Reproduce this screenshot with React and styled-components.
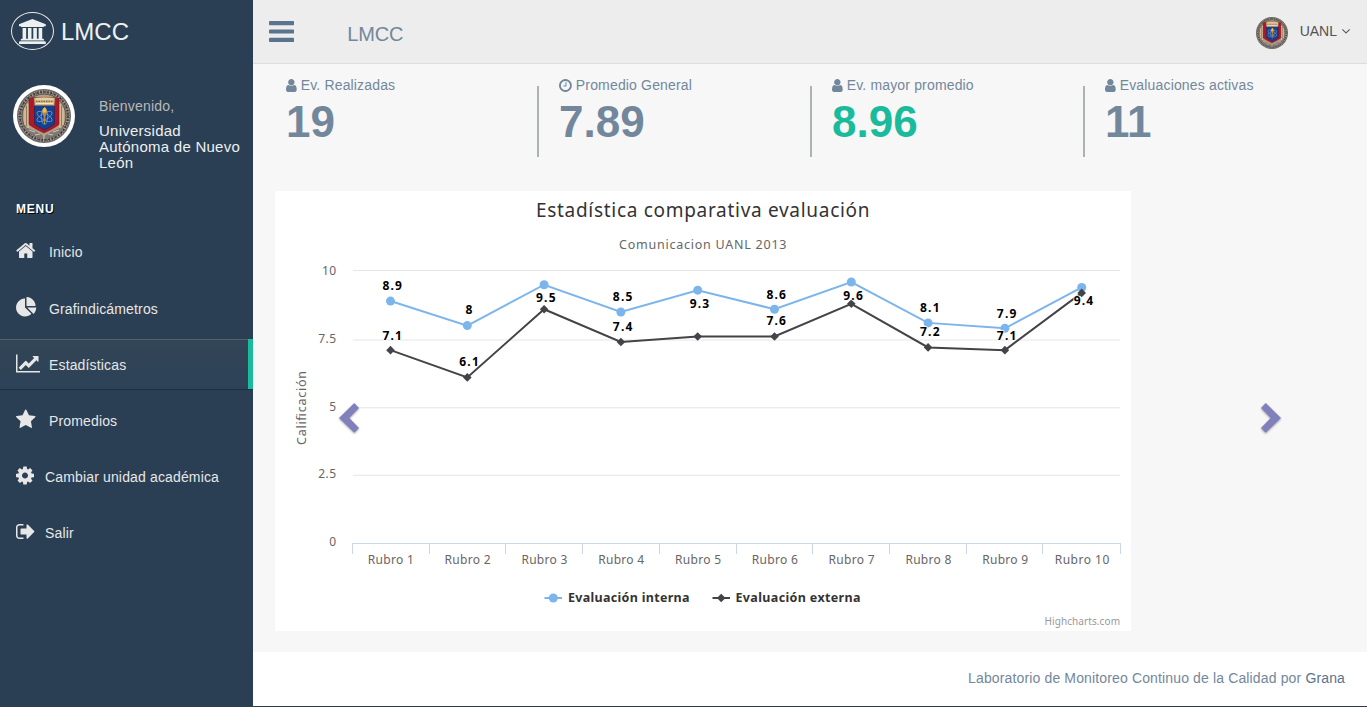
import React from "react";
import styled, { createGlobalStyle, css } from "styled-components";

const GlobalStyle = createGlobalStyle`
  * { box-sizing: border-box; }
  body {
    margin: 0;
    background: #2a3f54;
    color: #73879c;
    font-family: "Liberation Sans", Arial, sans-serif;
    font-size: 14px;
    overflow: hidden;
  }
`;

const Page = styled.div`
  display: flex;
  width: 1367px;
  height: 707px;
`;

const Sidebar = styled.aside`
  width: 253px;
  flex: none;
  background: #2a3f54;
  color: #e7e7e7;
`;

const Brand = styled.div`
  display: flex;
  align-items: center;
  gap: 7px;
  height: 62px;
  padding-left: 11px;
  font-size: 24px;
  color: #ecf0f1;
`;

const BrandBadge = styled.span`
  display: flex;
  align-items: center;
  justify-content: center;
  width: 43px;
  height: 38px;
  border: 1px solid #eaeaea;
  border-radius: 50%;
`;

const BrandName = styled.span`
  padding-top: 2px;
`;

const Profile = styled.div`
  display: flex;
  gap: 24px;
  height: 139px;
  padding: 23px 0 0 13px;
`;

const ProfilePicture = styled.div`
  width: 62px;
  height: 62px;
  padding: 4px;
  background: #fff;
  border-radius: 50%;
  line-height: 0;
`;

const ProfileInfo = styled.div`
  width: 150px;
  padding-top: 13px;
`;

const Welcome = styled.div`
  line-height: 16px;
  color: #bab8b8;
  letter-spacing: 0.2px;
`;

const UserName = styled.div`
  margin-top: 9px;
  font-size: 15px;
  line-height: 16px;
  color: #ecf0f1;
  letter-spacing: 0.25px;
`;

const MenuTitle = styled.h3`
  margin: 0;
  padding-left: 16px;
  height: 25px;
  font-size: 12px;
  line-height: 16px;
  letter-spacing: 0.8px;
  color: #fff;
  text-shadow: 1px 1px #000;
`;

const Menu = styled.ul`
  list-style: none;
  margin: 0;
  padding: 0;
`;

const MenuItem = styled.li`
  display: flex;
  align-items: center;
  height: 50px;
  margin-bottom: 6px;
  padding-left: 16px;
  letter-spacing: 0.15px;
  &:first-child {
    margin-bottom: 7px;
  }
  ${(p) =>
    p.$active &&
    css`
      border-right: 5px solid #1abb9c;
      background: linear-gradient(#334556, #2c4257);
      box-shadow: rgba(0, 0, 0, 0.25) 0 1px 0, inset rgba(255, 255, 255, 0.16) 0 1px 0;
    `}
`;

const MenuIcon = styled.span`
  display: flex;
  flex: none;
  width: ${(p) => (p.$narrow ? 29 : 33)}px;
  margin-top: -2px;
`;

const MenuText = styled.span`
  padding-top: 1px;
`;

const Main = styled.main`
  flex: 1;
  display: flex;
  flex-direction: column;
  background: #f7f7f7;
  border-bottom: 1px solid #2a3f54;
`;

const TopBar = styled.header`
  display: flex;
  align-items: center;
  height: 64px;
  padding: 0 17px 0 16px;
  background: #ededed;
  border-bottom: 1px solid #d9dee4;
`;

const TopTitle = styled.span`
  margin: 5px auto 0 53px;
  font-size: 20px;
  letter-spacing: -0.15px;
`;

const Account = styled.div`
  display: flex;
  align-items: center;
  color: #515356;
`;

const AccountPicture = styled.span`
  display: flex;
  margin: 2px 12px 0 0;
`;

const AccountName = styled.span`
  margin: -2px 5px 0 0;
`;

const Stats = styled.section`
  display: flex;
  height: 127px;
  padding: 11px 0 0 11px;
`;

const Stat = styled.div`
  position: relative;
  width: 273px;
  padding: 2px 0 0 22px;
  & + &::before {
    content: "";
    position: absolute;
    left: 0;
    top: 11px;
    width: 2px;
    height: 71px;
    background: #adb2b5;
  }
`;

const StatLabel = styled.div`
  display: flex;
  align-items: center;
  gap: 4px;
  height: 16px;
  white-space: nowrap;
  letter-spacing: 0.16px;
`;

const StatValue = styled.div`
  height: 58px;
  font-size: 44px;
  line-height: 58px;
  font-weight: bold;
  color: ${(p) => (p.$green ? "#1abb9c" : "inherit")};
`;

const Carousel = styled.section`
  position: relative;
  width: 1070px;
  height: 440px;
  margin-left: 22px;
`;

const Slide = styled.div`
  width: 856px;
  height: 440px;
  background: #fff;
`;

const Arrow = styled.button`
  position: absolute;
  top: 212px;
  ${(p) => (p.$side === "left" ? "left: 64px;" : "left: 986px; transform: scaleX(-1);")}
  padding: 0;
  border: 0;
  background: none;
  line-height: 0;
  svg {
    overflow: visible;
    filter: drop-shadow(0 1px 1px rgba(0, 0, 0, 0.35));
  }
`;

const Footer = styled.footer`
  display: flex;
  justify-content: flex-end;
  align-items: center;
  height: 54px;
  margin-top: auto;
  padding: 0 22px 2px 0;
  background: #fff;
  white-space: pre;
  letter-spacing: 0.14px;
`;

const FooterLink = styled.a`
  color: #5a738e;
`;

const ChartSvg = styled.svg`
  display: block;
  font-family: "Noto Sans", "Open Sans", sans-serif;
  font-size: 12px;
  fill: #666;
`;

const ICONS = {
  home: {
    box: [64, 0, 1664, 1792],
    d: "M1472 992v480q0 26-19 45t-45 19h-384v-384h-256v384h-384q-26 0-45-19t-19-45v-480q0-1 .5-3t.5-3l575-474 575 474q1 2 1 6zm223-69l-62 74q-8 9-21 11h-3q-13 0-21-7l-692-577-692 577q-12 8-24 7-13-2-21-11l-62-74q-8-10-7-23.5t11-21.5l719-599q32-26 76-26t76 26l244 204v-195q0-14 9-23t23-9h192q14 0 23 9t9 23v408l219 182q10 8 11 21.5t-7 23.5z",
  },
  pie: {
    box: [0, 0, 1792, 1792],
    d: "M768 890l546 546q-106 108-247.5 168t-298.5 60q-209 0-385.5-103t-279.5-279.5-103-385.5 103-385.5 279.5-279.5 385.5-103v762zm187 6h773q0 157-60 298.5t-168 247.5zm709-128h-768v-768q209 0 385.5 103t279.5 279.5 103 385.5z",
  },
  line: {
    box: [0, 0, 2048, 1792],
    d: "M2048 1536v128h-2048v-1536h128v1408h1920zm-128-1248v435q0 21-19.5 29.5t-35.5-7.5l-121-121-633 633q-10 10-23 10t-23-10l-233-233-416 416-192-192 585-585q10-10 23-10t23 10l233 233 464-464-121-121q-16-16-7.5-35.5t29.5-19.5h435q14 0 23 9t9 23z",
  },
  star: {
    box: [64, 0, 1664, 1792],
    d: "M1728 647q0 22-26 48l-363 354 86 500q1 7 1 20 0 21-10.5 35.5t-30.5 14.5q-19 0-40-12l-449-236-449 236q-22 12-40 12-21 0-31.5-14.5t-10.5-35.5q0-6 2-20l86-500-364-354q-25-27-25-48 0-37 56-46l502-73 225-455q19-41 49-41t49 41l225 455 502 73q56 9 56 46z",
  },
  cog: {
    box: [128, 0, 1536, 1792],
    d: "M1152 896q0-106-75-181t-181-75-181 75-75 181 75 181 181 75 181-75 75-181zm512-109v222q0 12-8 23t-20 13l-185 28q-19 54-39 91 35 50 107 138 10 12 10 25t-9 23q-27 37-99 108t-94 71q-12 0-26-9l-138-108q-44 23-91 38-16 136-29 186-7 28-36 28h-222q-14 0-24.5-8.5t-11.5-21.5l-28-184q-49-16-90-37l-141 107q-10 9-25 9-14 0-25-11-126-114-165-168-7-10-7-23 0-12 8-23 15-21 51-66.5t54-70.5q-27-50-41-99l-183-27q-13-2-21-12.5t-8-23.5v-222q0-12 8-23t19-13l186-28q14-46 39-92-40-57-107-138-10-12-10-24 0-10 9-23 26-36 98.5-107.5t94.5-71.5q13 0 26 10l138 107q44-23 91-38 16-136 29-186 7-28 36-28h222q14 0 24.5 8.5t11.5 21.5l28 184q49 16 90 37l142-107q9-9 24-9 13 0 25 10 129 119 165 170 7 8 7 22 0 12-8 23-15 21-51 66.5t-54 70.5q26 50 41 98l183 28q13 2 21 12.5t8 23.5z",
  },
  signOut: {
    box: [64, 0, 1664, 1792],
    d: "M704 1440q0 4 1 20t.5 26.5-3 23.5-10 19.5-20.5 6.5h-320q-119 0-203.5-84.5t-84.5-203.5v-704q0-119 84.5-203.5t203.5-84.5h320q13 0 22.5 9.5t9.5 22.5q0 4 1 20t.5 26.5-3 23.5-10 19.5-20.5 6.5h-320q-66 0-113 47t-47 113v704q0 66 47 113t113 47h312l11.5 1 11.5 3 8 5.5 7 9 2 13.5zm928-544q0 26-19 45l-544 544q-19 19-45 19t-45-19-19-45v-288h-448q-26 0-45-19t-19-45v-384q0-26 19-45t45-19h448v-288q0-26 19-45t45-19 45 19l544 544q19 19 19 45z",
  },
  university: {
    box: [0, 0, 1920, 1792],
    d: "M960 0l960 384v128h-128q0 26-20.5 45t-48.5 19h-1526q-28 0-48.5-19t-20.5-45h-128v-128zm-704 640h256v768h128v-768h256v768h128v-768h256v768h128v-768h256v768h59q28 0 48.5 19t20.5 45v64h-1664v-64q0-26 20.5-45t48.5-19h59v-768zm1595 960q28 0 48.5 19t20.5 45v128h-1920v-128q0-26 20.5-45t48.5-19h1782z",
  },
  user: {
    box: [256, 0, 1280, 1792],
    d: "M1536 1399q0 109-62.5 187t-150.5 78h-854q-88 0-150.5-78t-62.5-187q0-85 8.5-160.5t31.5-152 58.5-131 94-89 134.5-34.5q131 128 313 128t313-128q76 0 134.5 34.5t94 89 58.5 131 31.5 152 8.5 160.5zm-256-887q0 159-112.5 271.5t-271.5 112.5-271.5-112.5-112.5-271.5 112.5-271.5 271.5-112.5 271.5 112.5 112.5 271.5z",
  },
  clock: {
    box: [128, 0, 1536, 1792],
    d: "M1024 544v448q0 14-9 23t-23 9h-320q-14 0-23-9t-9-23v-64q0-14 9-23t23-9h224v-352q0-14 9-23t23-9h64q14 0 23 9t9 23zm416 352q0-148-73-273t-198-198-273-73-273 73-198 198-73 273 73 273 198 198 273 73 273-73 198-198 73-273zm224 0q0 209-103 385.5t-279.5 279.5-385.5 103-385.5-103-279.5-279.5-103-385.5 103-385.5 279.5-279.5 385.5-103 385.5 103 279.5 279.5 103 385.5z",
  },
  bars: {
    box: [128, 256, 1536, 1280],
    d: "M1664 1344v128q0 26-19 45t-45 19h-1408q-26 0-45-19t-19-45v-128q0-26 19-45t45-19h1408q26 0 45 19t19 45zm0-512v128q0 26-19 45t-45 19h-1408q-26 0-45-19t-19-45v-128q0-26 19-45t45-19h1408q26 0 45 19t19 45zm0-512v128q0 26-19 45t-45 19h-1408q-26 0-45-19t-19-45v-128q0-26 19-45t45-19h1408q26 0 45 19t19 45z",
  },
  angleDown: {
    box: [384, 640, 1024, 640],
    d: "M1395 736q0 13-10 23l-466 466q-10 10-23 10t-23-10l-466-466q-10-10-10-23t10-23l50-50q10-10 23-10t23 10l393 393 393-393q10-10 23-10t23 10l50 50q10 10 10 23z",
  },
};

function Icon({ name, height, color = "currentColor" }) {
  const { box, d } = ICONS[name];
  return (
    <svg width={(box[2] / box[3]) * height} height={height} viewBox={box.join(" ")} fill={color}>
      <path d={d} />
    </svg>
  );
}

function Emblem({ size }) {
  return (
    <svg width={size} height={size} viewBox="0 0 54 54">
      <circle cx="27" cy="27" r="27" fill="#6b6661" />
      <circle cx="27" cy="27" r="24" fill="none" stroke="#aaa49c" strokeWidth="3.4" strokeDasharray="1 1.5" />
      <circle cx="27" cy="27" r="24" fill="none" stroke="#35312f" strokeWidth="1.6" strokeDasharray="1.6 1.9" />
      <circle cx="27" cy="27" r="21.800" fill="#b89f80" stroke="#4b4542" strokeWidth="0.6" />
      <path d="M8 19v17M11 15v24M43 15v24M46 19v17" stroke="#dcc6a4" strokeWidth="1.3" />
      <path d="M9.500 17v20M44.500 17v20" stroke="#8a7158" strokeWidth="0.8" />
      <path d="M7 38q9 2 20 9 11-7 20-9-4 8-20 12Q11 46 7 38z" fill="#807a76" />
      <path d="M12 41l6 2M18 46l5-1M42 41l-6 2M36 46l-5-1M27 46v4" stroke="#c5bdb3" strokeWidth="1.200" />
      <path d="M12 9.500l6-1h18l6 1v26q-5 4-15 8.500Q17 39.500 12 35.500z" fill="#b01727" stroke="#6c1b22" strokeWidth="0.5" />
      <path d="M17.500 16h20v19q-4 3-10 6-6-3-10-6z" fill="#12418f" stroke="#2a2350" strokeWidth="0.7" />
      <path d="M17 9q10.500-2 21 0l-.5 7.500h-20z" fill="#d3b78a" stroke="#80694a" strokeWidth="0.5" />
      <path d="M18.500 10h18M19 14.500h17" stroke="#f3e3c2" strokeWidth="1.200" />
      <path d="M19 12.300h17" stroke="#72563a" strokeWidth="1" strokeDasharray="1.500 1" />
      <g fill="none" stroke="#7ea6e0" strokeWidth="0.700">
        <ellipse cx="27.500" cy="27.500" rx="8.500" ry="3.300" transform="rotate(30 27.500 27.500)" />
        <ellipse cx="27.500" cy="27.500" rx="8.500" ry="3.300" transform="rotate(-30 27.500 27.500)" />
        <ellipse cx="27.500" cy="27.500" rx="3.200" ry="8" />
      </g>
      <path d="M25 23h5l-1.500 4-.5 8h-1l-.5-8z" fill="#b98a3a" />
      <path d="M27.800 18q3 3 1.400 5.500h-3.200q-2-2.500 1.800-5.500z" fill="#ffb92e" />
    </svg>
  );
}

const MENU = [
  { icon: "home", text: "Inicio" },
  { icon: "pie", text: "Grafindicámetros" },
  { icon: "line", text: "Estadísticas", active: true },
  { icon: "star", text: "Promedios" },
  { icon: "cog", text: "Cambiar unidad académica", narrow: true },
  { icon: "signOut", text: "Salir", narrow: true },
];

const STATS = [
  { icon: "user", label: "Ev. Realizadas", value: "19" },
  { icon: "clock", label: "Promedio General", value: "7.89" },
  { icon: "user", label: "Ev. mayor promedio", value: "8.96", green: true },
  { icon: "user", label: "Evaluaciones activas", value: "11" },
];

const INTERNAL = [8.9, 8, 9.5, 8.5, 9.3, 8.6, 9.6, 8.1, 7.9, 9.4];
const EXTERNAL = [7.1, 6.1, 8.6, 7.4, 7.6, 7.6, 8.8, 7.2, 7.1, 9.2];
const TICKS = [77.5, 154.5, 230.5, 307.5, 384.5, 461.5, 537.5, 614.5, 691.5, 767.5, 845.5];
const GRID = [
  { label: "10", y: 79.5 },
  { label: "7.5", y: 149 },
  { label: "5", y: 216.8 },
  { label: "2.5", y: 284.3 },
];
const INTERNAL_LABELS = [99, 123, 111, 110, 117, 108, 109, 121, 127, 114];
const EXTERNAL_LABELS = [149, 175, null, 140, null, 134, null, 145, 149, null];

const px = (i) => 115.5 + i * 76.8;
const py = (v) => 352.6 - v * 27.25;
const points = (values) => values.map((v, i) => `${px(i)},${py(v)}`).join(" ");

function Diamond({ x, y }) {
  return <path d={`M${x} ${y - 4.3}l4.3 4.300-4.300 4.300-4.300-4.300z`} fill="#434348" />;
}

function DataLabel({ x, y, children }) {
  const wide = String(children).length > 1;
  return (
    <text
      x={x + 1.7}
      y={y}
      textAnchor="middle"
      fontWeight="700"
      fontSize="12"
      fill="#000"
      stroke="#fff"
      strokeWidth="1.4"
      paintOrder="stroke"
      strokeLinejoin="round"
      textLength={wide ? 19.5 : undefined}
    >
      {children}
    </text>
  );
}

function Chart() {
  return (
    <ChartSvg width="856" height="440" viewBox="0 0 856 440">
      <text x="261" y="26" fontSize="19" fill="#333" textLength="333.5">
        Estadística comparativa evaluación
      </text>
      <text x="344" y="58" fontSize="12.500" textLength="167.500">
        Comunicacion UANL 2013
      </text>
      {GRID.map((g) => (
        <line key={g.label} x1="78" x2="845" y1={g.y} y2={g.y} stroke="#e6e6e6" />
      ))}
      {["10", "7.5", "5", "2.5", "0"].map((t, i) => (
        <text key={t} x="61.500" y={84 + i * 67.8} textAnchor="end" fontSize="12" letterSpacing="0.4">
          {t}
        </text>
      ))}
      <text transform="translate(31 254) rotate(-90)" fontSize="12.500" textLength="74">
        Calificación
      </text>
      <path d={`M77 352.500H846${TICKS.map((x) => `M${x} 352v11`).join("")}`} stroke="#ccd6eb" fill="none" />
      {TICKS.slice(0, 10).map((x, i) => (
        <text key={x} x={px(i) + 0.3} y="373" textAnchor="middle" textLength={i === 9 ? 54.5 : 46}>
          {`Rubro ${i + 1}`}
        </text>
      ))}
      <polyline points={points(INTERNAL)} fill="none" stroke="#7cb5ec" strokeWidth="2" />
      {INTERNAL.map((v, i) => (
        <circle key={i} cx={px(i)} cy={py(v)} r="4.500" fill="#7cb5ec" />
      ))}
      <polyline points={points(EXTERNAL)} fill="none" stroke="#434348" strokeWidth="2" />
      {EXTERNAL.map((v, i) => (
        <Diamond key={i} x={px(i)} y={py(v)} />
      ))}
      {INTERNAL.map((v, i) => (
        <DataLabel key={i} x={px(i)} y={INTERNAL_LABELS[i]}>{v}</DataLabel>
      ))}
      {EXTERNAL.map(
        (v, i) =>
          EXTERNAL_LABELS[i] && (
            <DataLabel key={i} x={px(i)} y={EXTERNAL_LABELS[i]}>{v}</DataLabel>
          )
      )}
      <path d="M269.500 407h17.500" stroke="#7cb5ec" strokeWidth="2" />
      <circle cx="278.300" cy="407" r="4.500" fill="#7cb5ec" />
      <text x="293" y="411" fontWeight="700" fontSize="12.500" fill="#333" textLength="121.500">
        Evaluación interna
      </text>
      <path d="M437.500 407h17.500" stroke="#434348" strokeWidth="2" />
      <Diamond x={446.2} y={407} />
      <text x="460.500" y="411" fontWeight="700" fontSize="12.500" fill="#333" textLength="125">
        Evaluación externa
      </text>
      <text x="769.500" y="434" fontSize="10" fill="#999" textLength="75.500">
        Highcharts.com
      </text>
    </ChartSvg>
  );
}

function CarouselArrow({ side, label }) {
  return (
    <Arrow $side={side} aria-label={label}>
      <svg width="20" height="30" viewBox="0 0 20 30">
        <path d="M15.300 0L20 5 10.300 15 20 25l-4.700 4.800L0 15z" fill="#8080bd" />
      </svg>
    </Arrow>
  );
}

export default function App() {
  return (
    <>
      <GlobalStyle />
      <Page>
        <Sidebar>
          <Brand>
            <BrandBadge>
              <Icon name="university" height={25} color="#ecf0f1" />
            </BrandBadge>
            <BrandName>LMCC</BrandName>
          </Brand>
          <Profile>
            <ProfilePicture>
              <Emblem size={54} />
            </ProfilePicture>
            <ProfileInfo>
              <Welcome>Bienvenido,</Welcome>
              <UserName>Universidad Autónoma de Nuevo León</UserName>
            </ProfileInfo>
          </Profile>
          <MenuTitle>MENU</MenuTitle>
          <Menu>
            {MENU.map((m) => (
              <MenuItem key={m.text} $active={m.active}>
                <MenuIcon $narrow={m.narrow}>
                  <Icon name={m.icon} height={21} />
                </MenuIcon>
                <MenuText>{m.text}</MenuText>
              </MenuItem>
            ))}
          </Menu>
        </Sidebar>
        <Main>
          <TopBar>
            <Icon name="bars" height={21} color="#5a738e" />
            <TopTitle>LMCC</TopTitle>
            <Account>
              <AccountPicture>
                <Emblem size={32} />
              </AccountPicture>
              <AccountName>UANL</AccountName>
              <Icon name="angleDown" height={5} />
            </Account>
          </TopBar>
          <Stats>
            {STATS.map((s) => (
              <Stat key={s.label}>
                <StatLabel>
                  <Icon name={s.icon} height={15} />
                  {s.label}
                </StatLabel>
                <StatValue $green={s.green}>{s.value}</StatValue>
              </Stat>
            ))}
          </Stats>
          <Carousel>
            <Slide>
              <Chart />
            </Slide>
            <CarouselArrow side="left" label="Anterior" />
            <CarouselArrow side="right" label="Siguiente" />
          </Carousel>
          <Footer>
            Laboratorio de Monitoreo Continuo de la Calidad por <FooterLink>Grana</FooterLink>
          </Footer>
        </Main>
      </Page>
    </>
  );
}
